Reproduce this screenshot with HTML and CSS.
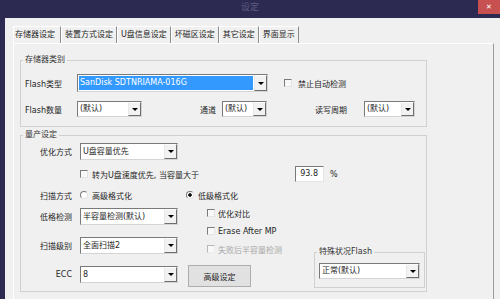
FILE: index.html
```html
<!DOCTYPE html>
<html lang="zh-CN">
  <head>
    <meta charset="UTF-8" />
    <title>设定</title>
    <link rel="stylesheet" href="styles.css">
  </head>
  <body>
    <div class="window">
      <!-- タイトルバー -->
      <div class="titlebar">
        <span class="title">设定</span>
        <span class="close">✕</span>
      </div>

      <div class="frame">
        <div class="tabs">
          <div class="tab active">存储器设定</div>
          <div class="tab">装置方式设定</div>
          <div class="tab">U盘信息设定</div>
          <div class="tab">坏磁区设定</div>
          <div class="tab">其它设定</div>
          <div class="tab">界面显示</div>
        </div>

        <div class="page">
          <!-- 存储器类别 -->
          <fieldset class="group group-storage">
            <legend>存储器类别</legend>
            <div class="group-body storage">
              <div class="row row-first">
                <span class="label">Flash类型</span>
                <div class="combo combo-flash">
                  <span class="value selected">SanDisk SDTNRIAMA-016G</span>
                  <span class="arrow"></span>
                </div>
                <span class="check check-auto"><span class="box"></span>禁止自动检测</span>
              </div>
              <div class="row row-second">
                <span class="label">Flash数量</span>
                <div class="combo combo-count">
                  <span class="value">(默认)</span>
                  <span class="arrow"></span>
                </div>
                <span class="label label-channel">通道</span>
                <div class="combo combo-channel">
                  <span class="value">(默认)</span>
                  <span class="arrow"></span>
                </div>
                <span class="label label-cycle">读写周期</span>
                <div class="combo combo-cycle">
                  <span class="value">(默认)</span>
                  <span class="arrow"></span>
                </div>
              </div>
            </div>
          </fieldset>

          <!-- 量产设定 -->
          <fieldset class="group group-mp">
            <legend>量产设定</legend>
            <div class="group-body mp">
              <div class="row row-opt">
                <span class="label label-right">优化方式</span>
                <div class="combo combo-wide">
                  <span class="value">U盘容量优先</span>
                  <span class="arrow"></span>
                </div>
              </div>
              <div class="row row-speed">
                <span class="check check-speed"><span class="box"></span>转为U盘速度优先, 当容量大于</span>
                <span class="num">93.8</span>
                <span class="unit">%</span>
              </div>
              <div class="row row-scan">
                <span class="label label-right">扫描方式</span>
                <span class="option option-first"><span class="radio"></span>高级格式化</span>
                <span class="option"><span class="radio on"></span>低级格式化</span>
              </div>

              <div class="lower">
                <div class="col-left">
                  <div class="row row-combo">
                    <span class="label label-right">低格检测</span>
                    <div class="combo combo-wide combo-mid">
                      <span class="value">半容量检测(默认)</span>
                      <span class="arrow"></span>
                    </div>
                  </div>
                  <div class="row row-combo">
                    <span class="label label-right">扫描级别</span>
                    <div class="combo combo-wide combo-mid">
                      <span class="value">全面扫描2</span>
                      <span class="arrow"></span>
                    </div>
                  </div>
                  <div class="row row-combo">
                    <span class="label label-right">ECC</span>
                    <div class="combo combo-wide combo-mid">
                      <span class="value">8</span>
                      <span class="arrow"></span>
                    </div>
                  </div>
                </div>

                <div class="col-mid">
                  <div class="checks">
                    <span class="check"><span class="box"></span>优化对比</span>
                    <span class="check"><span class="box"></span>Erase After MP</span>
                    <span class="check disabled"><span class="box"></span>失败后半容量检测</span>
                  </div>
                  <div class="btn">高级设定</div>
                </div>

                <div class="col-right">
                  <fieldset class="group group-special">
                    <legend>特殊状况Flash</legend>
                    <div class="group-body special">
                      <div class="combo">
                        <span class="value">正常(默认)</span>
                        <span class="arrow"></span>
                      </div>
                    </div>
                  </fieldset>
                </div>
              </div>
            </div>
          </fieldset>
        </div>
      </div>
    </div>
  </body>
</html>
```

FILE: styles.css
```css
body {
  margin: 0;
  font-family: "DejaVu Sans", "Noto Sans CJK SC", sans-serif;
  font-size: 8px;
  color: #1e1e1e;
  background-color: #f0f0f0;
}

.window {
  width: 500px;
  height: 299px;
  overflow: hidden;
  display: flex;
  flex-direction: column;
}

/* タイトルバー */
.titlebar {
  height: 18px;
  flex: none;
  background-color: #2c2a50;
  display: grid;
  grid-template-columns: 1fr auto 1fr;
}

.title {
  grid-column: 2;
  color: #5d5b82;
  font-size: 9px;
  line-height: 15px;
}

.close {
  grid-column: 3;
  justify-self: end;
  width: 22px;
  height: 14px;
  background-color: #c75050;
  color: #fff;
  text-align: center;
  line-height: 14px;
  font-size: 7px;
}

.frame {
  flex: 1;
  border-left: 5px solid #2c2a50;
  background-color: #f0f0f0;
}

/* タブ */
.tabs {
  display: flex;
  height: 17px;
  padding: 8px 0 0 8px;
}

.tab {
  line-height: 16px;
  padding: 0 3px;
  border-top: 1px solid #fff;
  border-left: 1px solid #fff;
  border-right: 1px solid #8c8c8c;
  white-space: nowrap;
}

.tab.active {
  padding: 0 5px 0 1px;
}

.page {
  margin-left: 8px;
  width: 481px;
  height: 256px;
  box-sizing: border-box;
  border-top: 1px solid #fff;
  border-left: 1px solid #fff;
  border-right: 1px solid #9c9c9c;
  padding: 11px 0 0 6px;
}

/* グループボックス */
.group {
  margin: 0;
  padding: 0;
  width: 407px;
  min-width: 0;
  box-sizing: border-box;
  border: 1px solid #d0d0d0;
}

.group legend {
  margin-left: 2px;
  padding: 0 2px;
  line-height: 10px;
  color: #333;
}

.group-mp {
  margin-top: 3px;
}

.storage {
  padding: 9px 0 8px 4px;
}

.mp {
  padding: 3px 0 2px 17px;
}

.row {
  display: flex;
  align-items: center;
}

.row-first {
  height: 18px;
}

.row-second {
  height: 18px;
  margin-top: 8px;
}

.label {
  width: 52px;
  flex: none;
  white-space: nowrap;
}

.label-right {
  width: 42px;
  box-sizing: border-box;
  padding-right: 8px;
  text-align: right;
}

.label-channel {
  width: 22px;
  margin-left: 58px;
}

.label-cycle {
  width: 49px;
  margin-left: 48px;
}

/* コンボボックス */
.combo {
  display: flex;
  height: 16px;
  box-sizing: border-box;
  border: 1px solid;
  border-color: #7a7a7a #d4d4d4 #d4d4d4 #7a7a7a;
  background-color: #fff;
}

.combo .value {
  flex: 1;
  padding-left: 2px;
  line-height: 14px;
  white-space: nowrap;
  overflow: hidden;
}

.combo .arrow {
  width: 13px;
  flex: none;
  box-sizing: border-box;
  border: 1px solid;
  border-color: #fff #6e6e6e #6e6e6e #e8e8e8;
  background-color: #f2f2f2;
  display: flex;
  align-items: center;
  justify-content: center;
}

.combo .arrow::after {
  content: "";
  border-left: 3px solid transparent;
  border-right: 3px solid transparent;
  border-top: 3px solid #000;
}

.combo-flash {
  width: 191px;
  height: 18px;
}

.combo-flash .value.selected {
  margin: 1px;
  padding-left: 1px;
  background-color: #3399ff;
  color: #fff;
}

.combo-count {
  width: 65px;
}

.combo-channel {
  width: 45px;
}

.combo-cycle {
  width: 51px;
}

.combo-wide {
  width: 98px;
  height: 17px;
}

.combo-wide .value {
  line-height: 15px;
}

/* チェックボックス */
.check {
  display: flex;
  align-items: center;
  white-space: nowrap;
}

.check .box {
  width: 8px;
  height: 8px;
  flex: none;
  box-sizing: border-box;
  border: 1px solid;
  border-color: #7a7a7a #e4e4e4 #e4e4e4 #7a7a7a;
  background-color: #f8f8f8;
  margin-right: 4px;
}

.check-auto {
  margin-left: 16px;
}

.check-auto .box {
  margin-right: 6px;
}

.check.disabled {
  color: #a8a8a8;
}

.check.disabled .box {
  border-color: #b8b8b8 #ececec #ececec #b8b8b8;
}

.row-opt {
  height: 17px;
}

.row-speed {
  height: 16px;
  margin-top: 6px;
  padding-left: 42px;
}

.check-speed {
  width: 215px;
}

.num {
  width: 29px;
  height: 16px;
  box-sizing: border-box;
  border: 1px solid;
  border-color: #7a7a7a #e4e4e4 #e4e4e4 #7a7a7a;
  background-color: #fff;
  text-align: right;
  padding-right: 5px;
  line-height: 14px;
}

.unit {
  margin-left: 6px;
}

/* ラジオボタン */
.row-scan {
  height: 14px;
  margin-top: 6px;
}

.option {
  display: flex;
  align-items: center;
  white-space: nowrap;
}

.option-first {
  width: 106px;
}

.radio {
  width: 8px;
  height: 8px;
  box-sizing: border-box;
  border-radius: 50%;
  border: 1px solid;
  border-color: #7a7a7a #e4e4e4 #e4e4e4 #7a7a7a;
  background-color: #fff;
  margin-right: 4px;
}

.radio.on {
  background: radial-gradient(circle, #111 0 1.5px, #fff 2px);
}

/* 下段 */
.lower {
  display: flex;
}

.col-left {
  width: 140px;
}

.row-combo {
  height: 29px;
}

.col-mid {
  width: 126px;
  margin-left: 10px;
}

.checks {
  display: flex;
  flex-direction: column;
  padding: 2px 0 0 19px;
}

.checks .check {
  height: 18px;
}

.checks .box {
  margin-right: 3px;
}

.btn {
  width: 63px;
  height: 22px;
  margin-top: 7px;
  box-sizing: border-box;
  border: 1px solid #adadad;
  background-color: #e1e1e1;
  display: flex;
  align-items: center;
  justify-content: center;
}

.col-right {
  width: 111px;
}

.group-special {
  width: 111px;
  margin-top: 45px;
}

.special {
  padding: 6px 4px 8px 4px;
}
```
